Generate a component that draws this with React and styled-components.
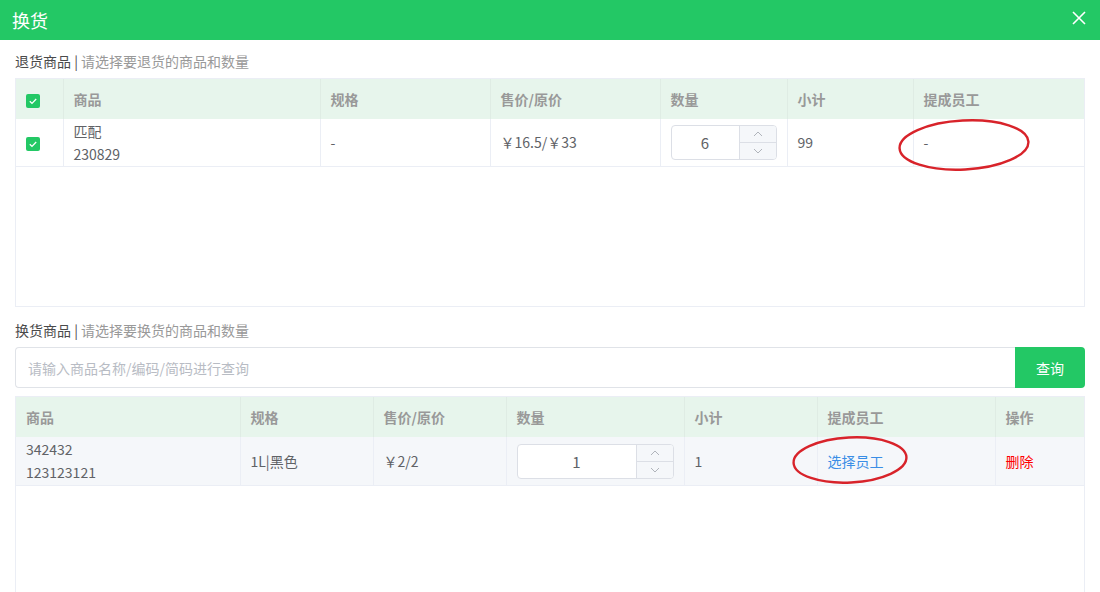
import React from "react";
import styled, { createGlobalStyle } from "styled-components";

const GlobalStyle = createGlobalStyle`
  body {
    margin: 0;
    background: #fff;
    font-family: "Microsoft YaHei", "Noto Sans CJK SC", "Noto Sans", sans-serif;
    font-size: 14px;
    color: #606266;
  }
`;

const Dialog = styled.div`
  width: 1100px;
  height: 592px;
  overflow: hidden;
  background: #fff;
`;

const Header = styled.div`
  height: 40px;
  background: #23c865;
  display: flex;
  align-items: center;
  justify-content: space-between;
  padding: 0 12px;
  color: #fff;
  font-size: 18px;
`;

const CloseBtn = styled.button`
  border: 0;
  background: none;
  padding: 0;
  width: 18px;
  height: 18px;
  display: flex;
  align-items: center;
  justify-content: center;
  margin-top: -4px;
  cursor: pointer;
`;

const Body = styled.div`
  padding: 11px 15px 0;
`;

const SectionLabel = styled.div`
  line-height: 20px;
  margin: ${p => (p.$second ? "13px 0 7px" : "0 0 7px")};
  color: #4a4a4a;
  font-weight: 400;
  span {
    color: #999;
  }
`;

const TableBox = styled.div`
  border: 1px solid #ebeef5;
  height: ${p => p.$height}px;
  box-sizing: border-box;
  overflow: visible;
`;

const Table = styled.table`
  width: 100%;
  table-layout: fixed;
  border-collapse: collapse;
`;

const Th = styled.th`
  height: 40px;
  padding: 0 10px;
  text-align: left;
  font-weight: 600;
  color: #999;
  background: #e7f5ec;
  border-right: 1px solid #dfece4;
  &:last-child { border-right: 0; }
`;

const Tr = styled.tr`
  background: ${p => (p.$hover ? "#f5f7fa" : "#fff")};
  border-bottom: 1px solid #ebeef5;
`;

const Td = styled.td`
  position: relative;
  height: ${p => p.$h || 47}px;
  padding: 0 10px;
  line-height: 23px;
  color: #606266;
  border-right: 1px solid #ebeef5;
  &:last-child { border-right: 0; }
`;

const Check = styled.span`
  display: inline-block;
  width: 14px;
  height: 14px;
  border-radius: 2px;
  background: #23c865;
  vertical-align: middle;
  svg { display: block; }
`;

const NumberInput = styled.div`
  display: flex;
  width: ${p => p.$w}px;
  height: 35px;
  border: 1px solid #dcdfe6;
  border-radius: 4px;
  background: #fff;
  box-sizing: border-box;
  overflow: hidden;
`;

const NumValue = styled.div`
  flex: 1;
  display: flex;
  align-items: center;
  justify-content: center;
  color: #606266;
  font-size: 15px;
`;

const NumCtrl = styled.div`
  width: 36px;
  display: flex;
  flex-direction: column;
  background: #f5f7fa;
  border-left: 1px solid #dcdfe6;
`;

const NumBtn = styled.div`
  flex: 1;
  display: flex;
  align-items: center;
  justify-content: center;
  & + & { border-top: 1px solid #dcdfe6; }
`;

const Link = styled.span`
  color: ${p => p.$color};
  cursor: pointer;
`;

const Circle = styled.svg`
  position: absolute;
  left: ${p => p.$left}px;
  top: ${p => p.$top}px;
  overflow: visible;
  pointer-events: none;
  z-index: 2;
`;

const SearchBar = styled.div`
  display: flex;
  height: 41px;
  margin-bottom: 8px;
`;

const SearchInput = styled.input`
  flex: 1;
  border: 1px solid #e0e3e8;
  border-right: 0;
  border-radius: 4px 0 0 4px;
  padding: 0 12px;
  font-family: inherit;
  font-size: 14px;
  outline: none;
  &::placeholder { color: #b8bcc4; }
`;

const SearchBtn = styled.button`
  width: 70px;
  border: 0;
  border-radius: 0 4px 4px 0;
  background: #23c865;
  color: #fff;
  font-family: inherit;
  font-size: 14px;
`;

const CheckMark = () => (
  <Check>
    <svg width="14" height="14" viewBox="0 0 14 14">
      <path d="M3.8 7.2l2.2 2.2 4.2-4.4" fill="none" stroke="#fff" strokeWidth="1.3" />
    </svg>
  </Check>
);

const Chevron = ({ up }) => (
  <svg width="10" height="6" viewBox="0 0 10 6">
    <path d={up ? "M1 5l4-4 4 4" : "M1 1l4 4 4-4"} fill="none" stroke="#b0b4bb" strokeWidth="1" />
  </svg>
);

const Stepper = ({ value, width }) => (
  <NumberInput $w={width}>
    <NumValue>{value}</NumValue>
    <NumCtrl>
      <NumBtn><Chevron up /></NumBtn>
      <NumBtn><Chevron /></NumBtn>
    </NumCtrl>
  </NumberInput>
);

const RedRing = ({ left, top, rx, ry }) => (
  <Circle $left={left} $top={top} width={rx * 2} height={ry * 2}>
    <ellipse cx={rx} cy={ry} rx={rx - 1.5} ry={ry - 1.5} fill="none" stroke="#d8232a" strokeWidth="2.4" transform={`rotate(-3 ${rx} ${ry})`} />
  </Circle>
);

const App = () => {
  return (
    <Dialog>
      <GlobalStyle />
      <Header>
        换货
        <CloseBtn>
          <svg width="14" height="14" viewBox="0 0 14 14">
            <path d="M1 1l12 12M13 1L1 13" stroke="#fff" strokeWidth="1.6" />
          </svg>
        </CloseBtn>
      </Header>
      <Body>
        <SectionLabel>退货商品 | <span>请选择要退货的商品和数量</span></SectionLabel>
        <TableBox $height={229}>
          <Table>
            <colgroup>
              <col style={{ width: 47 }} />
              <col style={{ width: 257 }} />
              <col style={{ width: 170 }} />
              <col style={{ width: 170 }} />
              <col style={{ width: 127 }} />
              <col style={{ width: 126 }} />
              <col />
            </colgroup>
            <thead>
              <tr>
                <Th><CheckMark /></Th>
                <Th>商品</Th>
                <Th>规格</Th>
                <Th>售价/原价</Th>
                <Th>数量</Th>
                <Th>小计</Th>
                <Th>提成员工</Th>
              </tr>
            </thead>
            <tbody>
              <Tr>
                <Td><CheckMark /></Td>
                <Td>匹配<br />230829</Td>
                <Td>-</Td>
                <Td>￥16.5/￥33</Td>
                <Td><Stepper value={6} width={106} /></Td>
                <Td>99</Td>
                <Td>
                  -
                  <RedRing left={-16} top={0} rx={66} ry={26} />
                </Td>
              </Tr>
            </tbody>
          </Table>
        </TableBox>

        <SectionLabel $second>换货商品 | <span>请选择要换货的商品和数量</span></SectionLabel>
        <SearchBar>
          <SearchInput placeholder="请输入商品名称/编码/简码进行查询" />
          <SearchBtn>查询</SearchBtn>
        </SearchBar>
        <TableBox $height={220}>
          <Table>
            <colgroup>
              <col style={{ width: 224 }} />
              <col style={{ width: 133 }} />
              <col style={{ width: 133 }} />
              <col style={{ width: 178 }} />
              <col style={{ width: 133 }} />
              <col style={{ width: 178 }} />
              <col />
            </colgroup>
            <thead>
              <tr>
                <Th>商品</Th>
                <Th>规格</Th>
                <Th>售价/原价</Th>
                <Th>数量</Th>
                <Th>小计</Th>
                <Th>提成员工</Th>
                <Th>操作</Th>
              </tr>
            </thead>
            <tbody>
              <Tr $hover>
                <Td $h={48}>342432<br />123123121</Td>
                <Td $h={48}>1L|黑色</Td>
                <Td $h={48}>￥2/2</Td>
                <Td $h={48}><Stepper value={1} width={157} /></Td>
                <Td $h={48}>1</Td>
                <Td $h={48}>
                  <Link $color="#3a8ee6">选择员工</Link>
                  <RedRing left={-26} top={-1} rx={58} ry={24} />
                </Td>
                <Td $h={48}><Link $color="#f00">删除</Link></Td>
              </Tr>
            </tbody>
          </Table>
        </TableBox>
      </Body>
    </Dialog>
  );
};

export default App;
